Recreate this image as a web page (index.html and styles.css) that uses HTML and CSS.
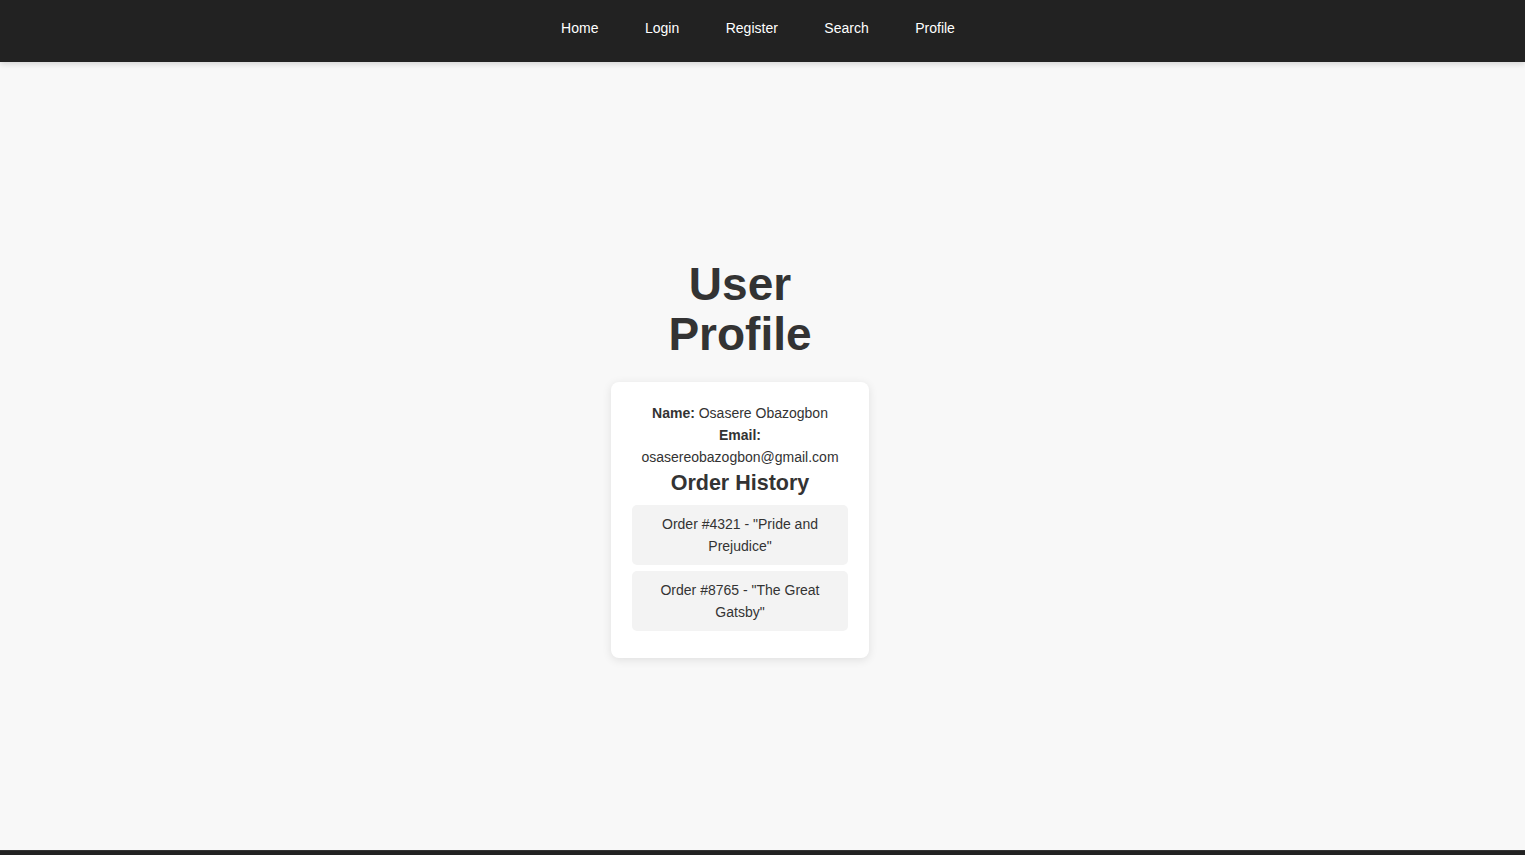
FILE: index.html
```html
<!DOCTYPE html>
<html lang="en">
<head>
<meta charset="utf-8">
<title>User Profile</title>
<link rel="stylesheet" href="styles.css">
</head>
<body>
<header class="site-header">
  <nav class="nav">
    <a href="#" class="nav-link">Home</a>
    <a href="#" class="nav-link">Login</a>
    <a href="#" class="nav-link">Register</a>
    <a href="#" class="nav-link">Search</a>
    <a href="#" class="nav-link">Profile</a>
  </nav>
</header>
<main class="main">
  <section class="profile">
    <h1 class="title">User Profile</h1>
    <div class="card">
      <p class="info"><strong>Name:</strong> Osasere Obazogbon</p>
      <p class="info"><strong>Email:</strong> osasereobazogbon@gmail.com</p>
      <h2 class="orders-title">Order History</h2>
      <ul class="orders">
        <li class="order">Order #4321 - "Pride and Prejudice"</li>
        <li class="order">Order #8765 - "The Great Gatsby"</li>
      </ul>
    </div>
  </section>
</main>
<footer class="site-footer"></footer>
</body>
</html>
```
FILE: styles.css
```css
* { box-sizing: border-box; }
html, body { margin: 0; padding: 0; }
body {
  background: #f8f8f8;
  color: #333;
  font-family: "Liberation Sans", Arial, sans-serif;
}
.site-header {
  height: 62px;
  background: #222;
  box-shadow: 0 2px 6px rgba(0,0,0,0.15);
  display: flex;
  align-items: center;
  justify-content: center;
  padding-right: 9px;
  position: relative;
  z-index: 1;
}
.nav {
  display: flex;
  gap: 46.5px;
  padding-bottom: 6px;
}
.nav-link {
  color: #fff;
  text-decoration: none;
  font-size: 14px;
}
.main {
  height: 788px;
  display: flex;
  align-items: center;
  justify-content: center;
  padding-right: 45px;
  padding-top: 4px;
}
.profile {
  width: 258px;
  display: flex;
  flex-direction: column;
  align-items: center;
}
.title {
  width: 200px;
  margin: 0 0 23px;
  font-size: 46px;
  line-height: 50px;
  font-weight: bold;
  text-align: center;
  color: #333;
}
.card {
  width: 258px;
  background: #fff;
  border-radius: 8px;
  box-shadow: 0 2px 10px rgba(0,0,0,0.1);
  padding: 20px 21px 21px;
  text-align: center;
}
.info {
  margin: 0;
  font-size: 14px;
  line-height: 22px;
}
.orders-title {
  margin: 3px 0 10px;
  font-size: 21.5px;
  line-height: 24px;
  font-weight: bold;
}
.orders {
  list-style: none;
  margin: 0;
  padding: 0;
}
.order {
  background: #f3f3f3;
  border-radius: 5px;
  padding: 8px 12px;
  margin-bottom: 6px;
  font-size: 14px;
  line-height: 22px;
}
.site-footer {
  height: 60px;
  background: #222;
  border-top: 1px solid #333;
}
```
